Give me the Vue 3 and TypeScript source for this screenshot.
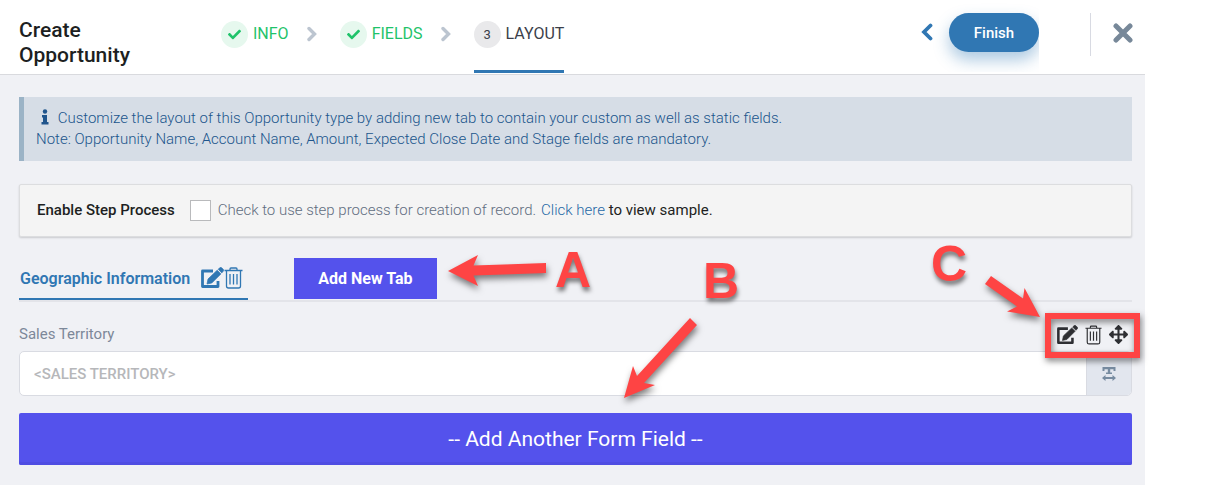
<script setup lang="ts">
import { ref } from 'vue'

interface Step {
  label: string
  done: boolean
}

const steps: Step[] = [
  { label: 'INFO', done: true },
  { label: 'FIELDS', done: true },
  { label: 'LAYOUT', done: false },
]

const stepProcess = ref(false)
const territory = ref('')
</script>

<template>
  <div class="app">
    <header class="topbar">
      <h1 class="title">Create Opportunity</h1>
      <nav class="steps" aria-label="Progress">
        <template v-for="(step, i) in steps" :key="step.label">
          <a href="#" class="step" :class="step.done ? 'done' : 'active'">
            <span class="badge">
              <svg v-if="step.done" width="13" height="13" viewBox="0 0 512 512" aria-hidden="true">
                <path fill="currentColor" d="M173.898 439.404l-166.4-166.4c-9.997-9.997-9.997-26.206 0-36.204l36.203-36.204c9.997-9.998 26.207-9.998 36.204 0L192 312.69 432.095 72.596c9.997-9.997 26.207-9.997 36.204 0l36.203 36.204c9.997 9.997 9.997 26.206 0 36.204l-294.4 294.401c-9.998 9.997-26.207 9.997-36.204-.001z" />
              </svg>
              <template v-else>{{ i + 1 }}</template>
            </span>
            {{ step.label }}
          </a>
          <svg v-if="i < steps.length - 1" class="sep" width="10" height="16" viewBox="0 0 10 16" aria-hidden="true">
            <path d="M2 2.5L7.5 8L2 13.5" fill="none" stroke="#bcc5d0" stroke-width="3.4" stroke-linecap="round" />
          </svg>
        </template>
      </nav>
      <div class="actions">
        <button type="button" class="icon-btn back" aria-label="Back">
          <svg width="12" height="18" viewBox="0 0 12 18">
            <path d="M9.5 2.5L3 9L9.5 15.5" fill="none" stroke="#3077b3" stroke-width="3.8" stroke-linecap="round" />
          </svg>
        </button>
        <div class="finish-clip"><button type="button" class="finish">Finish</button></div>
        <div class="divider"></div>
        <button type="button" class="icon-btn" aria-label="Close">
          <svg width="20" height="20" viewBox="0 0 20 20">
            <path d="M3 3L17 17M17 3L3 17" stroke="#778899" stroke-width="5" stroke-linecap="round" />
          </svg>
        </button>
      </div>
    </header>

    <main class="content">
      <section class="notice">
        <p>
          <svg class="info" width="8" height="16" viewBox="0 0 8 16" aria-hidden="true">
            <circle cx="4" cy="2.5" r="2.2" fill="currentColor" />
            <path d="M1 6h5v7h1.5v2.5h-7V13H2V8.5H1z" fill="currentColor" />
          </svg>
          Customize the layout of this Opportunity type by adding new tab to contain your custom as well as static fields.
        </p>
        <p>Note: Opportunity Name, Account Name, Amount, Expected Close Date and Stage fields are mandatory.</p>
      </section>

      <section class="panel">
        <span class="panel-title">Enable Step Process</span>
        <input id="step-process" v-model="stepProcess" type="checkbox" class="check" />
        <label for="step-process" class="hint">Check to use step process for creation of record.</label>
        <span class="sample"><a href="#">Click here</a> to view sample.</span>
      </section>

      <div class="tabs">
        <div class="tab">
          <a href="#" class="tab-name">Geographic Information</a>
          <button type="button" class="icon-btn" aria-label="Edit tab">
            <svg width="24" height="22" viewBox="0 0 24 22">
              <path d="M13 4H2.5v15.5H18V14" fill="none" stroke="currentColor" stroke-width="2.8" stroke-linejoin="round" />
              <path d="M7 17l1-5L17.2 3.2l3.7 3.7L11.8 16zM18.2 2.3L19.7.8q1-1 2 0L23.2 2.3q1 1 0 2L21.8 5.9z" fill="currentColor" stroke="currentColor" stroke-width="0.7" />
            </svg>
          </button>
          <button type="button" class="icon-btn" aria-label="Delete tab">
            <svg width="19" height="22" viewBox="0 0 19 22">
              <path d="M.5 3.5h18M6 3.5V2q0-1 1-1h5q1 0 1 1v1.5M2.5 3.5V19q0 2 2 2h10q2 0 2-2V3.5M6 7v10.5M9.5 7v10.5M13 7v10.5" fill="none" stroke="currentColor" stroke-width="1.3" />
            </svg>
          </button>
        </div>
        <button type="button" class="add-tab">Add New Tab</button>
      </div>

      <div class="field-head">
        <label for="territory">Sales Territory</label>
        <div class="tools">
          <button type="button" class="icon-btn" aria-label="Edit field">
            <svg width="22" height="20" viewBox="0 0 24 22">
              <path d="M13 4H2.5v15.5H18V14" fill="none" stroke="currentColor" stroke-width="2.8" stroke-linejoin="round" />
              <path d="M7 17l1-5L17.2 3.2l3.7 3.7L11.8 16zM18.2 2.3L19.7.8q1-1 2 0L23.2 2.3q1 1 0 2L21.8 5.9z" fill="currentColor" stroke="currentColor" stroke-width="0.7" />
            </svg>
          </button>
          <button type="button" class="icon-btn" aria-label="Delete field">
            <svg width="17" height="20" viewBox="0 0 19 22">
              <path d="M.5 3.5h18M6 3.5V2q0-1 1-1h5q1 0 1 1v1.5M2.5 3.5V19q0 2 2 2h10q2 0 2-2V3.5M6 7v10.5M9.5 7v10.5M13 7v10.5" fill="none" stroke="currentColor" stroke-width="1.3" />
            </svg>
          </button>
          <button type="button" class="icon-btn" aria-label="Move field">
            <svg width="19" height="19" viewBox="0 0 512 512">
              <path fill="currentColor" d="M352.201 425.775l-79.196 79.196c-9.373 9.373-24.568 9.373-33.941 0l-79.196-79.196c-15.119-15.119-4.411-40.971 16.971-40.97h51.162L228 284H127.196v51.162c0 21.382-25.851 32.09-40.971 16.971L7.029 272.937c-9.373-9.373-9.373-24.569 0-33.941L86.225 159.8c15.119-15.119 40.971-4.411 40.971 16.971V228H228V127.196h-51.23c-21.382 0-32.09-25.851-16.971-40.971l79.196-79.196c9.373-9.373 24.568-9.373 33.941 0l79.196 79.196c15.119 15.119 4.411 40.971-16.971 40.971h-51.162V228h100.804v-51.162c0-21.382 25.851-32.09 40.97-16.971l79.196 79.196c9.373 9.373 9.373 24.569 0 33.941L425.773 352.2c-15.119 15.119-40.971 4.411-40.97-16.971V284H284v100.804h51.23c21.382 0 32.09 25.851 16.971 40.971z" />
            </svg>
          </button>
        </div>
      </div>

      <div class="field">
        <input id="territory" v-model="territory" type="text" placeholder="&lt;SALES TERRITORY&gt;" />
        <button type="button" class="addon" aria-label="Field width">
          <svg width="14" height="14" viewBox="0 0 14 14">
            <path d="M.5 0h13v4h-2V2.2H8.2V5.5H10V7H4V5.5h1.8V2.2H2.5V4h-2z" fill="currentColor" />
            <path d="M0 11l3.5-3v2h7V8L14 11l-3.5 3v-2h-7v2z" fill="currentColor" />
          </svg>
        </button>
      </div>

      <button type="button" class="add-field">-- Add Another Form Field --</button>
    </main>

    <svg class="arrow arrow-a" width="100" height="34" viewBox="0 0 100 34" aria-hidden="true">
      <path d="M0 17L30 1L25.5 11.5L98 9V19L25.5 21.5L30 32z" fill="#fe4444" />
    </svg>
    <span class="mark mark-a">A</span>

    <svg class="arrow arrow-b" width="74" height="82" viewBox="0 0 74 82" aria-hidden="true">
      <path d="M0 82L9 50L13 60L66 2L73 9L20 67L31 69z" fill="#fe4444" />
    </svg>
    <span class="mark mark-b">B</span>

    <svg class="arrow arrow-c" width="56" height="42" viewBox="0 0 56 42" aria-hidden="true">
      <path d="M55 41L39.5 12L38 22.5L6 0L0 8L32 30.5L22 35.5z" fill="#fe4444" />
    </svg>
    <span class="mark mark-c">C</span>
    <div class="callout"></div>
  </div>
</template>

<style>
body {
  margin: 0;
  background: #fff;
}
</style>

<style scoped>
.app {
  position: relative;
  margin-right: 81px;
  background: #f0f1f5;
  color: #1d1f22;
  font-family: Roboto, "Liberation Sans", sans-serif;
  font-size: 15px;
  line-height: 21px;
}

a {
  color: #3077b3;
  text-decoration: none;
}

button {
  border: 0;
  padding: 0;
  font-family: inherit;
  cursor: pointer;
}

svg {
  display: block;
}

.icon-btn {
  background: none;
  color: inherit;
}

.topbar {
  display: flex;
  align-items: stretch;
  height: 74px;
  padding: 0 12px 0 19px;
  background: #fff;
  border-bottom: 1px solid #d9dade;
}

.title {
  width: 160px;
  margin: 18px 42px 0 0;
  font-size: 21px;
  line-height: 25px;
  font-weight: 500;
}

.steps {
  display: flex;
  align-items: stretch;
}

.step {
  display: flex;
  align-items: flex-start;
  gap: 5px;
  height: 50px;
  padding-top: 20px;
  border-bottom: 3px solid transparent;
  font-size: 16px;
  line-height: 28px;
}

.step.done {
  color: #1fc36a;
}

.step.active {
  color: #3b3f4a;
  border-bottom-color: #3077b3;
}

.badge {
  display: flex;
  align-items: center;
  justify-content: center;
  width: 27px;
  height: 27px;
  margin-top: 1px;
  border-radius: 50%;
  background: #e6f8ee;
  font-size: 13px;
}

.active .badge {
  background: #e9e9eb;
}

.sep {
  margin: 26px 23px 0 18px;
}

.actions {
  display: flex;
  align-items: flex-start;
  margin-left: auto;
  padding-top: 13px;
}

.back {
  padding: 10px 0 0;
}

.finish-clip {
  margin: -13px 0 0;
  padding: 13px 0 20px 16px;
  overflow: hidden;
}

.finish {
  width: 90px;
  height: 39px;
  border-radius: 20px;
  background: #3077b3;
  box-shadow: 0 8px 16px rgba(48, 119, 179, 0.4);
  color: #fff;
  font-size: 15px;
  font-weight: 500;
}

.divider {
  width: 1px;
  height: 43px;
  margin: 0 22px 0 51px;
  background: #d8dae2;
}

.divider + .icon-btn {
  margin-top: 10px;
}

.content {
  padding: 22px 13px 20px 19px;
}

.notice {
  padding: 11px 12px;
  border-left: 5px solid #9bb3c6;
  background: #d6dde6;
  color: #20558c;
  font-weight: 300;
}

.notice p {
  margin: 0;
}

.info {
  display: inline-block;
  margin: 0 5px 0 5px;
  vertical-align: -2px;
}

.panel {
  display: flex;
  align-items: center;
  margin-top: 23px;
  padding: 15px 17px;
  border: 1px solid #dcdddf;
  border-radius: 2px;
  background: #f4f4f4;
  box-shadow: 0 1px 2px rgba(0, 0, 0, 0.16);
}

.panel-title {
  font-weight: 500;
}

.check {
  appearance: none;
  width: 21px;
  height: 21px;
  margin: 0 7px 0 15px;
  border: 1px solid #b9babc;
  background: #fff;
}

.check:checked {
  background: #3077b3;
}

.hint {
  margin-right: 5px;
  color: #616d80;
  font-weight: 300;
}

.sample a {
  color: #1f68a6;
  font-weight: 300;
}

.tabs {
  display: flex;
  align-items: flex-start;
  margin-top: 21px;
  border-bottom: 2px solid #e3e4e9;
}

.tab {
  display: flex;
  align-items: center;
  height: 40px;
  margin-right: 46px;
  padding: 0 5px 0 1px;
  border-bottom: 2px solid #3077b3;
  color: #3077b3;
}

.tab-name {
  margin-right: 10px;
  font-size: 16px;
  font-weight: 600;
}

.add-tab {
  height: 41px;
  padding: 0 24px;
  background: #5452ec;
  color: #fff;
  font-size: 16px;
  font-weight: 700;
}

.field-head {
  display: flex;
  align-items: center;
  justify-content: space-between;
  height: 21px;
  margin: 22px 0 6px;
  padding-right: 4px;
  color: #7d8899;
}

.tools {
  display: flex;
  align-items: center;
  gap: 7px;
  color: #2e2f33;
}

.field {
  display: flex;
  height: 43px;
  border: 1px solid #d9dbe2;
  border-radius: 5px;
  background: #fff;
  overflow: hidden;
}

.field input {
  flex: 1;
  min-width: 0;
  padding: 0 14px;
  border: 0;
  outline: 0;
  background: none;
  font-family: inherit;
  font-size: 15px;
}

.field input::placeholder {
  color: #b6b7ba;
  font-weight: 500;
  opacity: 1;
}

.addon {
  display: flex;
  align-items: center;
  justify-content: center;
  width: 45px;
  border-left: 1px solid #d9dbe2;
  background: #e2e6ee;
  color: #778ba0;
}

.add-field {
  width: 100%;
  height: 52px;
  margin-top: 17px;
  border-radius: 2px;
  background: #5452ec;
  box-shadow: inset 0 -3px 0 #4f4de2;
  color: #fff;
  font-size: 21px;
}

.arrow {
  position: absolute;
  overflow: visible;
  filter: drop-shadow(1px 4px 3px rgba(0, 0, 0, 0.5));
  pointer-events: none;
}

.arrow-a {
  left: 448px;
  top: 254px;
}

.arrow-b {
  left: 624px;
  top: 316px;
}

.arrow-c {
  right: 104px;
  top: 276px;
}

.mark {
  position: absolute;
  color: #fe4444;
  font-family: "Liberation Sans", Arial, sans-serif;
  font-size: 50px;
  line-height: 50px;
  font-weight: 700;
  text-shadow: 1px 4px 4px rgba(0, 0, 0, 0.5);
  pointer-events: none;
}

.mark-a {
  left: 555px;
  top: 245px;
}

.mark-b {
  left: 703px;
  top: 256px;
}

.mark-c {
  right: 178px;
  top: 239px;
}

.callout {
  position: absolute;
  right: 5px;
  top: 313px;
  width: 83px;
  height: 33px;
  border: 6px solid #fe4444;
  filter: drop-shadow(1px 3px 3px rgba(0, 0, 0, 0.5));
  pointer-events: none;
}
</style>
